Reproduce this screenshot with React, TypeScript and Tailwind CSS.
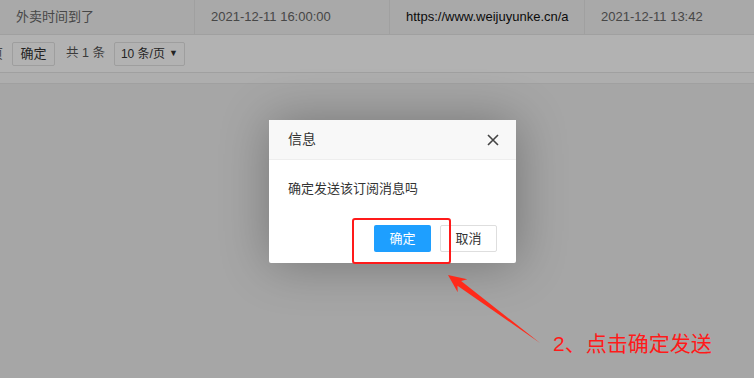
import React from 'react';

const font = { fontFamily: '"Liberation Sans", "Noto Sans CJK SC", sans-serif' };

export default function App() {
    return (
        <div className="relative w-[754px] h-[378px] overflow-hidden bg-[#eeeeee]" style={font}>
            {/* underlying page */}
            <div className="bg-white">
                <div className="flex h-[35px] bg-[#f2f2f2] border-b border-[#e6e6e6] text-[13px] text-[#666]">
                    <div className="w-[195px] pl-[16px] flex items-center border-r border-[#e6e6e6]">外卖时间到了</div>
                    <div className="w-[195px] pl-[16px] flex items-center border-r border-[#e6e6e6]">2021-12-11 16:00:00</div>
                    <div className="w-[195px] pl-[16px] flex items-center border-r border-[#e6e6e6] text-[#111] whitespace-nowrap overflow-hidden">https://www.weijuyunke.cn/a</div>
                    <div className="flex-1 pl-[16px] flex items-center">2021-12-11 13:42</div>
                </div>
                <div className="flex items-center h-[38px] border-b border-[#e6e6e6] text-[13px] text-[#333] whitespace-nowrap">
                    <span className="-ml-[10px] mr-[9px] text-[#666]">页</span>
                    <button className="h-[24px] w-[43px] border border-[#e2e2e2] rounded-[2px] bg-white text-[13px] text-[#333]">确定</button>
                    <span className="ml-[11px] text-[12.5px] text-[#555]">共 1 条</span>
                    <div className="ml-[9px] h-[24px] w-[71px] border border-[#e2e2e2] rounded-[2px] bg-white flex items-center justify-between pl-[6px] pr-[6px]">
                        <span className="text-[12px]">10 条/页</span>
                        <span className="text-[9px]">▼</span>
                    </div>
                </div>
                <div className="h-[11px] border-b border-[#e6e6e6] bg-[#fafafa]" />
            </div>

            {/* shade */}
            <div className="absolute inset-0 bg-black/30" />

            {/* dialog */}
            <div className="absolute left-[269px] top-[120px] w-[247px] bg-white rounded-[2px] shadow-[1px_1px_50px_rgba(0,0,0,0.3)]">
                <div className="h-[40px] pl-[19px] pr-[17px] flex items-center justify-between bg-[#f8f8f8] border-b border-[#eeeeee] text-[14px] text-[#333]">
                    <span>信息</span>
                    <svg width="12" height="12" viewBox="0 0 12 12">
                        <path d="M1 1L11 11M11 1L1 11" stroke="#444" strokeWidth="1.6" />
                    </svg>
                </div>
                <div className="px-[19px] pt-[19px] text-[13px] leading-[20px] text-[#333]">确定发送该订阅消息吗</div>
                <div className="flex justify-end gap-[9px] pr-[19px] pt-[26px] pb-[11px]">
                    <button className="h-[27px] w-[57px] rounded-[2px] bg-[#1e9fff] text-white text-[13px]">确定</button>
                    <button className="h-[27px] w-[57px] rounded-[2px] border border-[#dedede] bg-white text-[#333] text-[13px]">取消</button>
                </div>
            </div>

            {/* annotations */}
            <div className="absolute left-[352px] top-[218px] w-[99px] h-[46px] border-2 border-[#ff1a1a] rounded-[3px]" />
            <svg className="absolute inset-0 pointer-events-none" width="754" height="378">
                <polygon
                    points="448,275 467.3,279.2 461.1,281.0 540,343 457.5,285.8 457.7,292.2"
                    fill="#ff2a1a"
                />
            </svg>
            <div className="absolute left-[553px] top-[330px] text-[21px] leading-[27px] text-[#ff1a1a] whitespace-nowrap">2、点击确定发送</div>
        </div>
    );
}
